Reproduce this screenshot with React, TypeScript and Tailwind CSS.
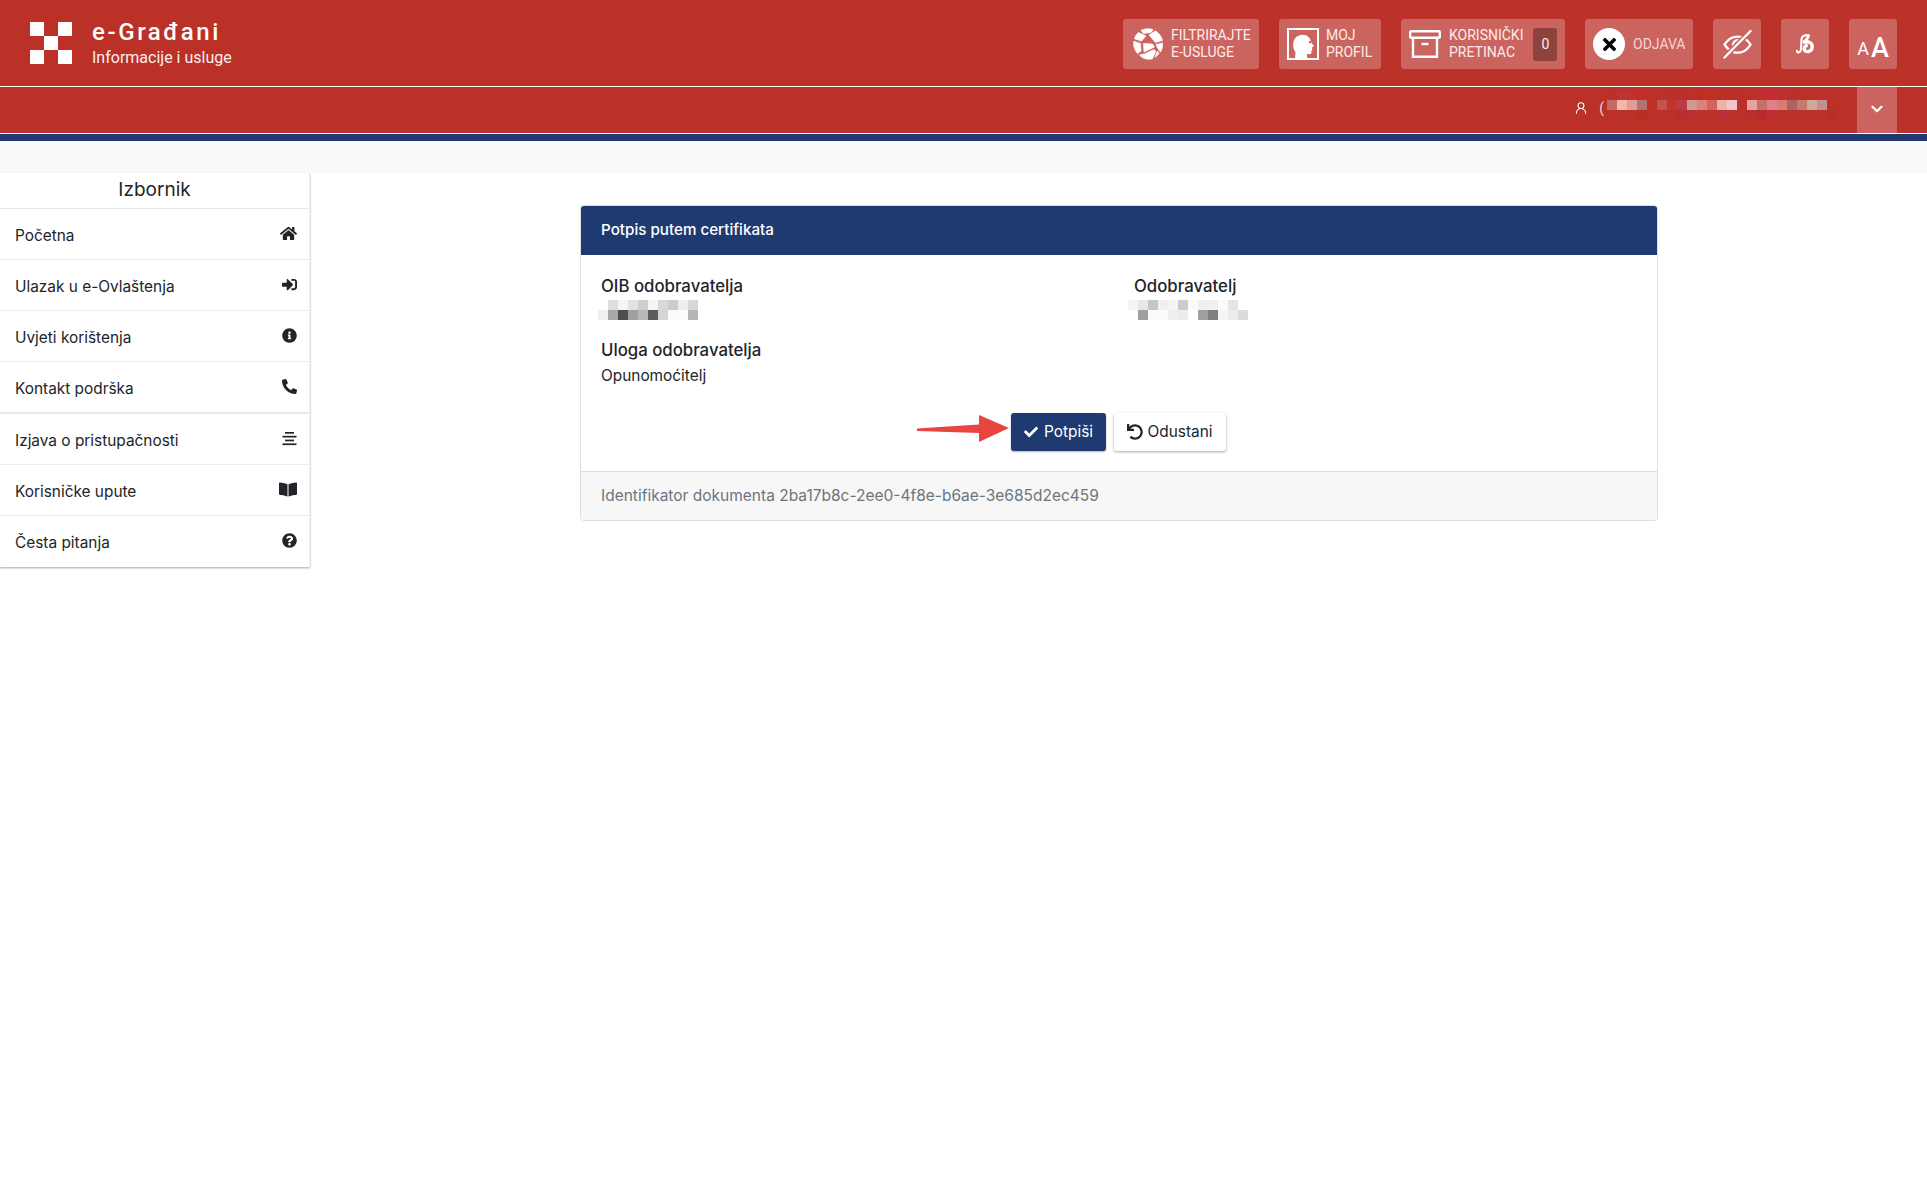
import { FaHome, FaSignInAlt, FaInfoCircle, FaPhoneAlt, FaBookOpen, FaQuestionCircle, FaCheck, FaUndo, FaTimes } from "react-icons/fa";
import { ChevronDown, UserRound } from "lucide-react";
import type { ReactNode } from "react";

const MENU: { label: string; icon: ReactNode; thick?: boolean }[] = [
  { label: "Početna", icon: <FaHome className="h-[17px] w-[17px]" /> },
  { label: "Ulazak u e-Ovlaštenja", icon: <FaSignInAlt className="h-[15px] w-[15px]" /> },
  { label: "Uvjeti korištenja", icon: <FaInfoCircle className="h-[15px] w-[15px]" /> },
  { label: "Kontakt podrška", icon: <FaPhoneAlt className="h-[15px] w-[15px]" />, thick: true },
  { label: "Izjava o pristupačnosti", icon: <AlignIcon /> },
  { label: "Korisničke upute", icon: <FaBookOpen className="h-[17px] w-[18px]" /> },
  { label: "Česta pitanja", icon: <FaQuestionCircle className="h-[15px] w-[15px]" /> },
];

// pixelated (blurred out) values, one colour per 10px cell, "" = nothing
const USER_MOSAIC = [
  ["#ba3029", "#bd3530", "#c22f30", "#c42c2a", "#bb3027", "", "#b93027", "#bc2f28", "#bb3028", "#bb2f27", "#c03020", "#ba3028", "#b73027", "#b82f2c", "", "#c02e30", "#c42c38", "#bc3030", "#ba3028", "#bb3028", "#bb3028", "", ""],
  ["#c46a62", "#f4b5ad", "#e39c95", "#b07370", "", "#c1544c", "#c4332f", "#b93a4a", "#cc9a90", "#de8076", "#d0635e", "#e8b3ad", "#f2c6c8", "", "#e3a59c", "#c4706a", "#e08088", "#da7a70", "#aa6468", "#c47a6c", "#cfa898", "#c4908e", ""],
  ["#bb3028", "#bb3028", "#bb3028", "#b92d22", "", "#bb3028", "#bb3028", "#b82c38", "#bb2f30", "#bc3028", "#bb3028", "#b93038", "#bb3028", "", "#bb2d30", "#b92b2b", "#c02c38", "#bb3028", "#bb3028", "#bb3028", "#bb3028", "#bb3028", "#b53028"],
];

const OIB_MOSAIC = [
  ["", "#dedede", "#f4f4f4", "#e2e2e2", "#cfcfcf", "#f5f5f5", "#d5dadb", "#cccccc", "#eeeeee", "#d8d8d8"],
  ["#f0f0f0", "#a8a8a8", "#4d4d4d", "#a0a0a0", "#b8b8b8", "#5c5c5c", "#d5d5d5", "#fafafa", "#fcfcfc", "#b5b5b5"],
];

const NAME_MOSAIC = [
  ["#f5f5f5", "#e8e8e8", "#c5c5c5", "#f0f0f0", "#f5f5f5", "#cccccc", "#fafafa", "#efefef", "#f0f0f0", "#fafafa", "#e5e5e5", ""],
  ["", "#a0a0a0", "#fafafa", "#fcfcfc", "#efefef", "#ececec", "", "#a0a0a0", "#808080", "#f5f5f5", "#ececec", "#dcdcdc"],
];

function Mosaic({ rows, className }: { rows: string[][]; className?: string }) {
  return (
    <div className={className}>
      {rows.map((row, r) => (
        <div key={r} className="flex h-[10px]">
          {row.map((c, i) => (
            <div key={i} className="h-[10px] w-[10px]" style={{ backgroundColor: c || "transparent" }} />
          ))}
        </div>
      ))}
    </div>
  );
}

function AlignIcon() {
  return (
    <svg viewBox="0 0 15 15" className="h-[15px] w-[15px]" fill="currentColor">
      <rect x="3" y="1" width="9" height="1.7" />
      <rect x="0.5" y="4.8" width="14" height="1.7" />
      <rect x="3" y="8.6" width="9" height="1.7" />
      <rect x="0.5" y="12.4" width="14" height="1.7" />
    </svg>
  );
}

function GlobeIcon() {
  return (
    <svg viewBox="0 0 32 32" className="h-[32px] w-[32px] shrink-0" fill="#fff" stroke="#fff" strokeWidth="0.7" strokeLinejoin="round">
      <path d="M10 2.5 C13 .5 19 .3 22 1.6 L20 4.5 L12.5 5.5 Z" />
      <path d="M7.5 4.5 L15 8 L10.5 13 L3.5 10.8 C4 8.5 5.5 6 7.5 4.5 Z" />
      <path d="M18 7 L24.5 2.8 C28 5 30.5 8.5 31.5 12.5 L24.5 14.5 Z" />
      <path d="M2.8 13.2 L9.5 15.5 L10 23 L6.5 25.5 C3.5 22 2 17.5 2.8 13.2 Z" />
      <path d="M12.5 15.5 L21.5 16 L23.5 19 L13 24 Z" />
      <path d="M25 16.5 L31.7 15 C31.8 18.5 31 21.5 29.5 24 L26.8 20.5 Z" />
      <path d="M8.5 27 L14 25.8 L23 21.5 L24.8 23.5 L21.5 30.7 C17 32 12 31 8.5 27 Z" />
      <path d="M26.5 23 L28 25 C27 27 25.5 28.3 24 29.3 Z" />
    </svg>
  );
}

function ProfileIcon() {
  return (
    <svg viewBox="0 0 32 32" className="h-[32px] w-[32px] shrink-0">
      <rect x="1" y="1" width="30" height="30" fill="none" stroke="#fff" strokeWidth="2" />
      <path
        d="M8 31 L8.5 24 C5.5 20.5 5.5 14 8 10.5 C11 6.5 18 5.5 21.5 9 C23.5 11 24 13 24.2 14.5 L27 18 L25 19.5 L25.3 22 L24.3 23 L24.5 25 C24 26.3 22 26.3 20 26 L20.3 31 Z"
        fill="#fff"
      />
      <circle cx="23" cy="14.2" r="1" fill="#bb3028" />
    </svg>
  );
}

function ArchiveIcon() {
  return (
    <svg viewBox="0 0 32 28" className="h-[28px] w-[32px] shrink-0" fill="none" stroke="#fff" strokeWidth="2.4">
      <rect x="1.2" y="1.2" width="29.6" height="6.6" rx="1" />
      <path d="M4 8 V26.8 H28 V8" />
      <path d="M12.5 14 H19.5" />
    </svg>
  );
}

function EyeOffIcon() {
  return (
    <svg viewBox="0 0 30 30" className="h-[29px] w-[29px]" fill="none" stroke="#fff" strokeWidth="2.4" strokeLinecap="round">
      <path d="M1.5 15 C5.5 9 10 6.8 15 6.8 C20 6.8 25 9.5 28.5 15 C25 21 20 23.5 15 23.5 C10 23.5 5.5 21 1.5 15 Z" />
      <path d="M10.5 17.5 C9.5 13.5 12 10.8 15 10.5" />
      <path d="M28.5 1 L1.5 28.5" stroke="#cb645e" strokeWidth="5.5" />
      <path d="M28.5 1 L1.5 28.5" strokeWidth="2.4" />
    </svg>
  );
}

function DyslexiaIcon() {
  return (
    <svg viewBox="0 0 20 22" className="h-[20px] w-[18px]" fill="none" stroke="#fff" strokeLinecap="round">
      <path d="M0.8 18.5 C1.5 21 4.8 21 5.5 17.5 L6.2 5.5 C6.6 1.5 12 0.2 14 2.2" strokeWidth="2.4" />
      <path d="M14 1.5 C13 5 11 7.5 9 8.5" strokeWidth="3" />
      <path d="M9.5 9 C13.5 7.5 18 9.5 18 14 C18 18.5 13.5 20.5 10.5 18.8 C8.5 17.5 8.8 14 11.5 12.8" strokeWidth="3.8" />
    </svg>
  );
}

function HeaderButton({ children, className }: { children: ReactNode; className?: string }) {
  return (
    <div className={"flex h-[50px] items-center rounded-[3px] bg-[#cb645e] text-[14px] leading-[17px] text-[#fbeceb] " + (className ?? "")}>
      {children}
    </div>
  );
}

export default function App() {
  return (
    <div className="min-h-screen bg-white font-['Inter',sans-serif] text-[15.4px] text-[#212529]">
      <header className="bg-[#bb3027] font-['Roboto',sans-serif] text-white">
        <div className="flex h-[86px] items-center justify-between pl-[30px] pr-[30px]">
          <div className="flex items-center gap-[20px]">
            <svg viewBox="0 0 42 42" className="h-[42px] w-[42px]" fill="#fff">
              <rect x="0" y="0" width="14" height="14" />
              <rect x="28" y="0" width="14" height="14" />
              <rect x="14" y="14" width="14" height="14" />
              <rect x="0" y="28" width="14" height="14" />
              <rect x="28" y="28" width="14" height="14" />
            </svg>
            <div>
              <div className="text-[24px] font-medium leading-[28px] tracking-[2.6px]">e-Građani</div>
              <div className="mt-[2px] text-[16px] leading-[20px] text-[#fbeeee]">Informacije i usluge</div>
            </div>
          </div>
          <div className="mt-[2px] flex items-center gap-[20px]">
            <HeaderButton className="w-[136px] gap-[8px] pl-[8px]">
              <GlobeIcon />
              <div>
                FILTRIRAJTE
                <br />
                E-USLUGE
              </div>
            </HeaderButton>
            <HeaderButton className="w-[102px] gap-[7px] pl-[8px]">
              <ProfileIcon />
              <div>
                MOJ
                <br />
                PROFIL
              </div>
            </HeaderButton>
            <HeaderButton className="w-[164px] gap-[8px] pl-[8px]">
              <ArchiveIcon />
              <div>
                KORISNIČKI
                <br />
                PRETINAC
              </div>
              <div className="ml-[2px] flex h-[33px] w-[24px] items-center justify-center rounded-[3px] bg-[#8e423c]">0</div>
            </HeaderButton>
            <HeaderButton className="w-[108px] gap-[8px] pl-[8px]">
              <div className="flex h-[32px] w-[32px] items-center justify-center rounded-full bg-white text-black">
                <FaTimes className="h-[19px] w-[19px]" />
              </div>
              <div className="text-[#f4d4d1]">ODJAVA</div>
            </HeaderButton>
            <HeaderButton className="w-[48px] justify-center">
              <EyeOffIcon />
            </HeaderButton>
            <HeaderButton className="w-[48px] justify-center">
              <DyslexiaIcon />
            </HeaderButton>
            <HeaderButton className="w-[48px] items-baseline justify-center gap-[2px] pt-[9px] text-white">
              <span className="text-[18px] leading-none">A</span>
              <span className="text-[27px] font-medium leading-none">A</span>
            </HeaderButton>
          </div>
        </div>
        <div className="flex h-[48px] items-center justify-end border-y border-white pr-[30px]">
          <div className="flex h-full items-center">
            <div className="mb-[4px] flex items-center">
              <UserRound className="h-[14px] w-[14px]" strokeWidth={1.8} />
              <span className="ml-[11px] text-[14px] opacity-80">(</span>
            </div>
            <Mosaic rows={USER_MOSAIC} className="mb-[10px] ml-[3px]" />
          </div>
          <div className="ml-[20px] flex h-full w-[40px] items-center justify-center bg-[#cb645e]">
            <ChevronDown className="mb-[2px] h-[18px] w-[18px]" strokeWidth={3} />
          </div>
        </div>
        <div className="h-[7px] bg-[#1e3a70]" />
      </header>
      <div className="h-[32px] bg-[#f8f9fa]" />
      <div className="flex items-start">
        <aside className="w-[310px] shrink-0 border-r border-[#eeeeee] shadow-[0_1px_2px_rgba(0,0,0,0.35)]">
          <div className="flex h-[36px] items-center justify-center border-b border-[#e9e9e9] pb-[2px] text-[19px] leading-none">Izbornik</div>
          {MENU.map((m) => (
            <div
              key={m.label}
              className={
                "flex h-[51px] items-center justify-between pl-[15px] pr-[12px] pt-[3px] " +
                (m.thick ? "h-[52px] border-b-2 border-[#e9e9e9]" : "border-b border-[#ededed] last:border-b-0")
              }
            >
              <span>{m.label}</span>
              <span className="mb-[5px] flex text-[#212529]">{m.icon}</span>
            </div>
          ))}
        </aside>
        <main className="ml-[270px] mt-[32px] w-[1078px] overflow-hidden rounded-[4px] border border-[#dfdfdf]">
          <div className="flex h-[49px] items-center bg-[#1e3a70] px-[20px] text-[15.2px] font-medium text-white">Potpis putem certifikata</div>
          <div className="px-[20px] pt-[19px]">
            <div className="grid grid-cols-[533px_1fr]">
              <div>
                <div className="text-[16.8px] font-medium leading-[24px]">OIB odobravatelja</div>
                <Mosaic rows={OIB_MOSAIC} className="ml-[-3px] mt-[2px]" />
              </div>
              <div>
                <div className="text-[16.8px] font-medium leading-[24px]">Odobravatelj</div>
                <Mosaic rows={NAME_MOSAIC} className="ml-[-6px] mt-[2px]" />
              </div>
            </div>
            <div className="mt-[18px] text-[16.8px] font-medium leading-[24px]">Uloga odobravatelja</div>
            <div className="mt-[3px] leading-[21px]">Opunomoćitelj</div>
            <div className="mt-[27px] flex justify-center gap-[8px] pb-[20px] pr-[2px]">
              <div className="relative flex h-[38px] w-[95px] items-center justify-center gap-[5px] rounded-[3px] bg-[#1e3a70] text-white shadow-[0_1px_2px_rgba(0,0,0,0.3)]">
                <FaCheck className="h-[14px] w-[16px]" />
                Potpiši
                <svg viewBox="0 0 92 28" className="absolute left-[-94px] top-[2px] h-[28px] w-[92px]" fill="#e8453f">
                  <path d="M0 13.5 L62 9.5 L62 0 L92 13 L62 27 L62 18 L0 16 Z" />
                </svg>
              </div>
              <div className="flex h-[38px] w-[112px] items-center justify-center gap-[5px] rounded-[3px] bg-white shadow-[0_1px_3px_rgba(0,0,0,0.35)]">
                <FaUndo className="h-[16px] w-[16px] text-[#212529]" />
                Odustani
              </div>
            </div>
          </div>
          <div className="flex h-[49px] items-center border-t border-[#dddddd] bg-[#f7f7f7] px-[20px] text-[15.5px] text-[#6c757d]">
            Identifikator dokumenta 2ba17b8c-2ee0-4f8e-b6ae-3e685d2ec459
          </div>
        </main>
      </div>
    </div>
  );
}
